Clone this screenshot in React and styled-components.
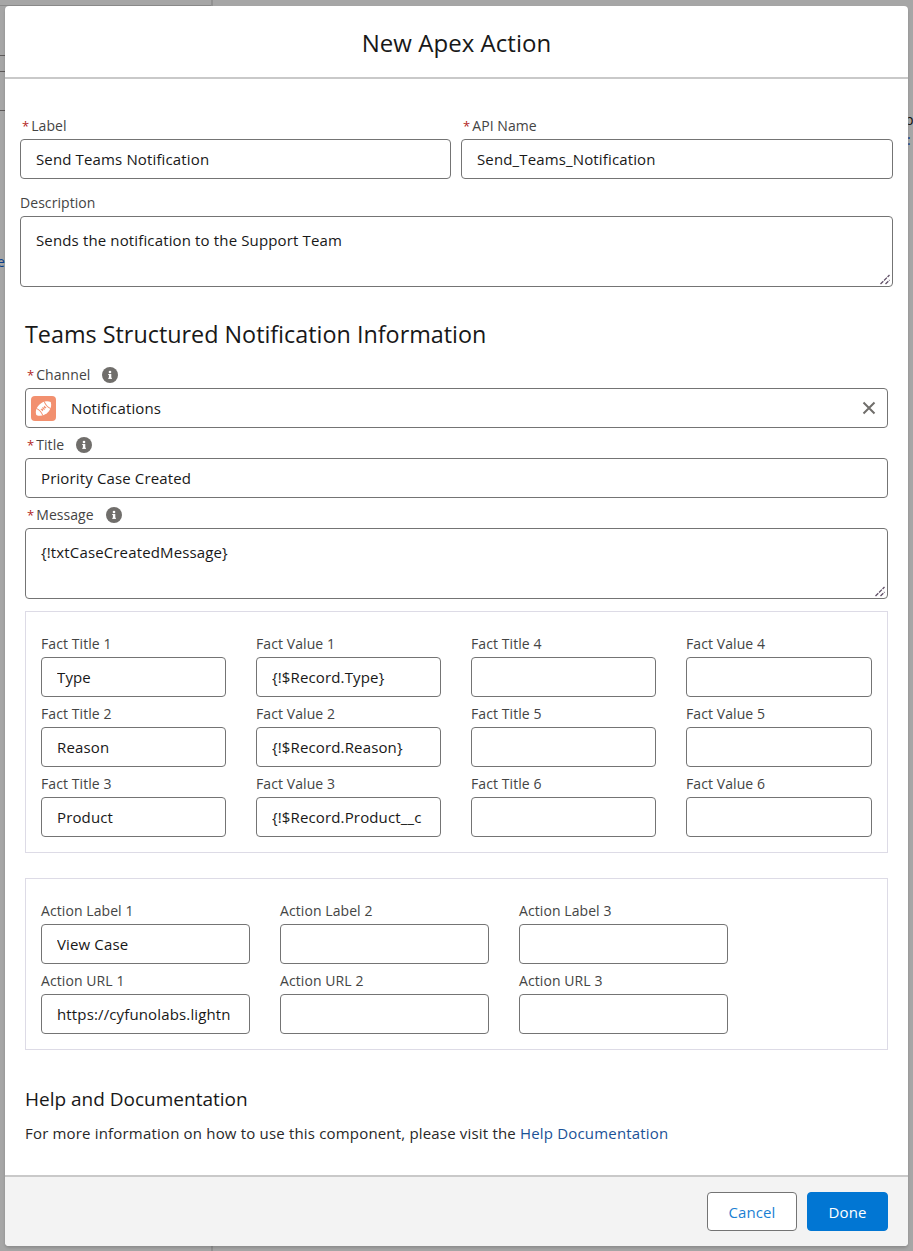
import React from "react";
import styled, { createGlobalStyle } from "styled-components";

const Global = createGlobalStyle`
  html, body { margin: 0; padding: 0; }
  body { background: #a6a6a6; font-family: "Open Sans", "Noto Sans", "Liberation Sans", sans-serif; color: #181818; }
  * { box-sizing: border-box; }
`;
const Page = styled.div`
  position: relative; width: 913px; height: 1251px; padding: 6px 5px 5px; overflow: hidden; background: #a6a6a6;
`;
const BackdropLine = styled.div`
  position: absolute; background: ${p => p.$c || "#7f7f7f"};
  left: ${p => p.$x}px; top: ${p => p.$y}px; width: ${p => p.$w}px; height: ${p => p.$h}px;
`;
const BackdropText = styled.span`
  position: absolute; left: ${p => p.$x}px; top: ${p => p.$y}px; font-size: 14px; line-height: 18px; color: ${p => p.$c};
`;
const Modal = styled.div`
  position: relative; height: 1240px; background: #fff; border-radius: 4px; display: flex; flex-direction: column; overflow: hidden;
  box-shadow: 0 2px 3px rgba(0,0,0,.16);
`;
const Header = styled.header`
  height: 73px; flex: none; padding-top: 2px; border-bottom: 2px solid #c9c9c9; display: flex; align-items: center; justify-content: center;
`;
const Title = styled.h2`
  margin: 0; font-size: 24px; font-weight: 400; letter-spacing: .05px; color: #181818;
`;
const Body = styled.div`
  flex: 1; padding: 37px 15px 0;
`;
const TopGrid = styled.div`
  display: grid; grid-template-columns: 431px 432px; column-gap: 10px;
`;
const Field = styled.div`
  display: flex; flex-direction: column;
`;
const LabelRow = styled.div`
  height: 23px; padding-bottom: 4px; display: flex; align-items: center; font-size: 14px; line-height: 20px; letter-spacing: .06px; color: #444;
  padding-left: ${p => p.$pad || 0}px; margin-top: ${p => p.$mt || 0}px;
`;
const Star = styled.span`
  color: #b3261e; font-size: 13px; margin-right: 2px;
`;
const Info = styled.span`
  width: 16px; height: 16px; border-radius: 50%; background: #706e6b; display: inline-flex; align-items: center; justify-content: center; margin-left: 12px; color: #fff;
`;
const Box = styled.div`
  position: relative; height: ${p => p.$h || 40}px; border: 1px solid #747474; border-radius: 4px; background: #fff;
  padding: ${p => p.$multi ? "13px 15px 0" : "0 15px"}; display: flex; align-items: ${p => p.$multi ? "flex-start" : "center"};
  font-size: 15px; letter-spacing: .14px; color: #181818; overflow: hidden; white-space: nowrap;
`;
const Clip = styled.span`
  display: block; overflow: hidden; flex: 1;
`;
const Grip = styled.svg`
  position: absolute; right: 0; bottom: 0; width: 13px; height: 13px;
`;
const Inner = styled.div`
  padding: 0 5px;
`;
const SectionTitle = styled.h3`
  margin: 31px 0 15px; font-size: 23.35px; line-height: 32px; font-weight: 400; color: #181818;
`;
const GroupBox = styled.div`
  border: 1px solid #dddbe6; margin-top: ${p => p.$mt}px; padding: ${p => p.$pt}px 15px 15px;
  display: grid; grid-template-columns: ${p => p.$cols}; column-gap: 30px; row-gap: 7px;
`;
const SmallLabel = styled.div`
  height: 23px; display: flex; align-items: center; padding-bottom: 4px; font-size: 14px; letter-spacing: .08px; color: #444;
`;
const ChannelIcon = styled.span`
  width: 25px; height: 25px; margin: 0 15px 0 -10px; border-radius: 4px; background: #f2906f; display: inline-flex; align-items: center; justify-content: center; flex: none;
`;
const Clear = styled.svg`
  width: 14px; height: 14px; flex: none; margin-right: -4px;
`;
const Help = styled.section`
  margin-top: 36px;
`;
const HelpTitle = styled.h4`
  margin: 0; font-size: 19px; line-height: 26px; font-weight: 400; color: #181818;
`;
const HelpText = styled.p`
  margin: 11px 0 0; font-size: 15px; line-height: 20px; letter-spacing: .18px; color: #282828;
`;
const Link = styled.a`
  color: #1b5297; text-decoration: none;
`;
const Footer = styled.footer`
  height: 71px; flex: none; background: #f3f3f3; border-top: 2px solid #c9c9c9; padding: 15px 20px 0 0; display: flex; justify-content: flex-end; gap: 10px; align-items: flex-start;
`;
const Button = styled.button`
  height: 39px; width: ${p => p.$w}px; border-radius: 4px; font-family: inherit; font-size: 15px; letter-spacing: .1px; padding: 0;
  border: 1px solid ${p => p.$primary ? "#0176d3" : "#747474"};
  background: ${p => p.$primary ? "#0176d3" : "#fff"}; color: ${p => p.$primary ? "#fff" : "#1b7fd3"};
`;

const InfoIcon = () => (
  <Info>
    <svg width="10" height="10" viewBox="0 0 10 10"><rect x="3.9" y="4" width="2.4" height="4.6" fill="#fff"/><rect x="3.2" y="7.8" width="3.8" height="1" fill="#fff"/><rect x="3.2" y="4" width="2" height="1" fill="#fff"/><circle cx="5" cy="2" r="1.3" fill="#fff"/></svg>
  </Info>
);
const GripIcon = () => (
  <Grip viewBox="0 0 13 13"><path d="M1.5 11 L10.5 2 M6.5 11 L10.5 7" stroke="#5f4f66" strokeWidth="1.3" strokeDasharray="4 1" fill="none"/></Grip>
);

const Req = ({ children, info, pad, mt }) => (
  <LabelRow $pad={pad} $mt={mt}><Star>*</Star>{children}{info && <InfoIcon />}</LabelRow>
);

const Cell = ({ label, value }) => (
  <Field>
    <SmallLabel>{label}</SmallLabel>
    <Box><Clip>{value}</Clip></Box>
  </Field>
);

const facts = [
  ["Fact Title 1", "Type"], ["Fact Value 1", "{!$Record.Type}"], ["Fact Title 4", ""], ["Fact Value 4", ""],
  ["Fact Title 2", "Reason"], ["Fact Value 2", "{!$Record.Reason}"], ["Fact Title 5", ""], ["Fact Value 5", ""],
  ["Fact Title 3", "Product"], ["Fact Value 3", "{!$Record.Product__c"], ["Fact Title 6", ""], ["Fact Value 6", ""],
];
const actions = [
  ["Action Label 1", "View Case"], ["Action Label 2", ""], ["Action Label 3", ""],
  ["Action URL 1", "https://cyfunolabs.lightn"], ["Action URL 2", ""], ["Action URL 3", ""],
];

export default function App() {
  return (
    <Page>
      <Global />
      <BackdropLine $x={0} $y={5} $w={211} $h={1} $c="#8a8a8a" />
      <BackdropLine $x={211} $y={0} $w={2} $h={6} $c="#929292" />
      <BackdropLine $x={211} $y={1246} $w={2} $h={5} $c="#929292" />
      <BackdropLine $x={0} $y={55} $w={5} $h={1} $c="#5e5a5a" />
      <BackdropLine $x={0} $y={71} $w={5} $h={1} $c="#5e5a5a" />
      <BackdropLine $x={0} $y={110} $w={5} $h={1} $c="#5e5a5a" />
      <BackdropText $x={-3} $y={253} $c="#0b3f8a">e</BackdropText>
      <BackdropText $x={905} $y={111} $c="#111">p</BackdropText>
      <BackdropText $x={907} $y={131} $c="#0b3f8a">:</BackdropText>
      <Modal>
        <Header><Title>New Apex Action</Title></Header>
        <Body>
          <TopGrid>
            <Field><Req pad={2}>Label</Req><Box>Send Teams Notification</Box></Field>
            <Field><Req pad={2}>API Name</Req><Box>Send_Teams_Notification</Box></Field>
          </TopGrid>
          <Field>
            <LabelRow $mt={14}>Description</LabelRow>
            <Box $h={71} $multi>Sends the notification to the Support Team<GripIcon /></Box>
          </Field>
          <Inner>
            <SectionTitle>Teams Structured Notification Information</SectionTitle>
            <Field>
              <Req pad={2} info>Channel</Req>
              <Box>
                <ChannelIcon>
                  <svg width="21" height="21" viewBox="0 0 21 21" fill="none">
                    <g transform="rotate(-42 10.5 10.5)">
                      <path d="M0.8 10.5 C4 2.8 17 2.8 20.2 10.5 C17 18.2 4 18.2 0.8 10.5 Z" fill="#fff" />
                      <path d="M5.2 5.6 C6.4 8.5 6.4 12.5 5.2 15.4 M15.8 5.6 C14.6 8.5 14.6 12.5 15.8 15.4" stroke="#f2906f" strokeWidth="1" />
                      <path d="M8 10.5 H13 M8.4 9 V12 M10.5 9 V12 M12.6 9 V12" stroke="#f2906f" strokeWidth="1" />
                    </g>
                  </svg>
                </ChannelIcon>
                <Clip>Notifications</Clip>
                <Clear viewBox="0 0 14 14"><path d="M1.5 1.5 L12.5 12.5 M12.5 1.5 L1.5 12.5" stroke="#706e6b" strokeWidth="2" /></Clear>
              </Box>
            </Field>
            <Field>
              <Req pad={2} mt={7} info>Title</Req>
              <Box>Priority Case Created</Box>
            </Field>
            <Field>
              <Req pad={2} mt={7} info>Message</Req>
              <Box $h={71} $multi>{"{!txtCaseCreatedMessage}"}<GripIcon /></Box>
            </Field>
            <GroupBox $mt={12} $pt={22} $cols="185px 185px 185px 186px">
              {facts.map(([l, v]) => <Cell key={l} label={l} value={v} />)}
            </GroupBox>
            <GroupBox $mt={25} $pt={22} $cols="209px 209px 209px">
              {actions.map(([l, v]) => <Cell key={l} label={l} value={v} />)}
            </GroupBox>
            <Help>
              <HelpTitle>Help and Documentation</HelpTitle>
              <HelpText>For more information on how to use this component, please visit the <Link href="#">Help Documentation</Link></HelpText>
            </Help>
          </Inner>
        </Body>
        <Footer>
          <Button $w={90}>Cancel</Button>
          <Button $w={81} $primary>Done</Button>
        </Footer>
      </Modal>
    </Page>
  );
}
